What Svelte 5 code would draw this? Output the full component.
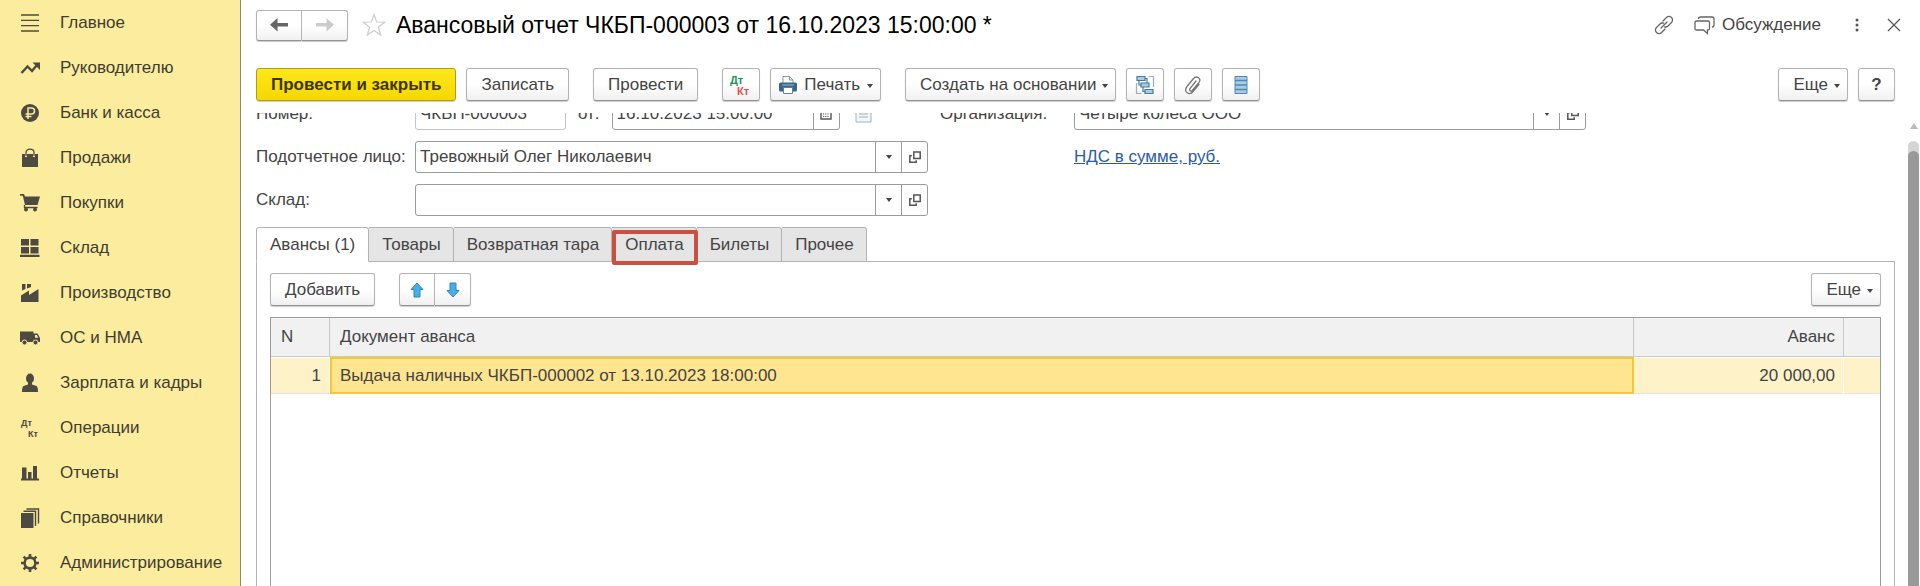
<script lang="ts">
  type Section = { icon: string; label: string }

  const sections: Section[] = [
    { icon: "menu", label: "Главное" },
    { icon: "trend", label: "Руководителю" },
    { icon: "ruble", label: "Банк и касса" },
    { icon: "bag", label: "Продажи" },
    { icon: "cart", label: "Покупки" },
    { icon: "boxes", label: "Склад" },
    { icon: "factory", label: "Производство" },
    { icon: "truck", label: "ОС и НМА" },
    { icon: "person", label: "Зарплата и кадры" },
    { icon: "dtkt", label: "Операции" },
    { icon: "chart", label: "Отчеты" },
    { icon: "books", label: "Справочники" },
    { icon: "gear", label: "Администрирование" },
  ]

  const tabs = ["Авансы (1)", "Товары", "Возвратная тара", "Оплата", "Билеты", "Прочее"]
  const marked = "Оплата"

  const rows = [
    { n: 1, doc: "Выдача наличных ЧКБП-000002 от 13.10.2023 18:00:00", sum: "20 000,00" },
  ]

  let activeTab = $state("Авансы (1)")
  let number = $state("ЧКБП-000003")
  let date = $state("16.10.2023 15:00:00")
  let person = $state("Тревожный Олег Николаевич")
  let warehouse = $state("")
  let company = $state("Четыре колеса ООО")
</script>

{#snippet sectionIcon(name: string)}
  <svg class="section-icon" viewBox="0 0 20 20" width="20" height="20" fill="#4d4a41" aria-hidden="true">
    {#if name === "menu"}
      <path d="M1 2h18M1 7.300h18M1 12.600h18M1 18h18" stroke="#4d4a41" stroke-width="1.300" />
    {:else if name === "trend"}
      <path d="M1.500 15l6-6.500 4.500 4.500 5-6" fill="none" stroke="#4d4a41" stroke-width="2.400" />
      <path d="M12.500 4.500H20V12z" />
    {:else if name === "ruble"}
      <circle cx="10" cy="10" r="9" />
      <path d="M8 16V5h3.500a2.900 2.900 0 0 1 0 6H5.500M5.500 13.500h6" fill="none" stroke="#fbec9e" stroke-width="1.500" />
    {:else if name === "bag"}
      <path d="M2 6h3v3h2V6h6v3h2V6h3v13H2z" />
      <path d="M6 8V4.500C6 0 14 0 14 4.500V8" fill="none" stroke="#4d4a41" stroke-width="1.300" />
    {:else if name === "cart"}
      <path d="M0 1h4l1 2.500h15L17.500 12H5L2.800 2.800H0z" />
      <path d="M4.500 12v2.500h13" fill="none" stroke="#4d4a41" stroke-width="1.300" />
      <circle cx="6" cy="16.500" r="2" /><circle cx="15" cy="16.500" r="2" />
    {:else if name === "boxes"}
      <path d="M1 1h8v6.500H1zM10.500 1h8v6.500h-8zM1 9h8v6.500H1zM10.500 9h8v6.500h-8zM0 16.800h19.500V19H0z" />
    {:else if name === "factory"}
      <path d="M2 1h3.500v5L2 7.500zM7 1h4v3L7 5.500zM1 12.500L9 7.500V12l9.500-6V19H1z" />
    {:else if name === "truck"}
      <path d="M0 3.500h13.500V14H0zM13 5.500h4.500L20 10v4h-7z" />
      <path d="M15 7h1.800l1.600 2.700H15z" fill="#fbec9e" />
      <circle cx="4.500" cy="14.500" r="2.500" stroke="#fbec9e" /><circle cx="15.500" cy="14.500" r="2.500" stroke="#fbec9e" />
    {:else if name === "person"}
      <ellipse cx="10" cy="5.500" rx="4" ry="5" />
      <path d="M8 9h4v2.500l4.500 1.500q1.500 1 1.500 6H2q0-5 1.500-6L8 11.500z" />
    {:else if name === "dtkt"}
      <text class="glyph" x="1" y="8">Дт</text>
      <text class="glyph" x="8" y="19">Кт</text>
    {:else if name === "chart"}
      <path d="M2 4.500h4.500V16H2zM8 9h3.500v7H8zM13 3h4v13h-4zM1 15.500h18V17.500H1z" />
    {:else if name === "books"}
      <path d="M1 5h12.500v15H1z" />
      <path d="M3.500 3.300h12V18M6.500 1h12v14.500" fill="none" stroke="#4d4a41" stroke-width="1.400" />
    {:else}
      <circle cx="10" cy="10" r="5.400" fill="none" stroke="#4d4a41" stroke-width="2.600" />
      <path
        d="M10 1v3M10 16v3M1 10h3M16 10h3M3.600 3.600l2.200 2.200M14.200 14.200l2.200 2.200M3.600 16.400l2.200-2.200M14.200 5.800l2.200-2.200"
        stroke="#4d4a41"
        stroke-width="2.600"
      />
    {/if}
  </svg>
{/snippet}

{#snippet caret()}
  <svg class="caret" viewBox="0 0 6 4" width="6" height="4" aria-hidden="true"><path d="M0 0h6L3 4z" fill="#444" /></svg>
{/snippet}

{#snippet pickers()}
  <button class="pick" aria-label="Выбрать">{@render caret()}</button>
  <button class="pick" aria-label="Открыть">
    <svg viewBox="0 0 12 12" width="12" height="12" fill="none" stroke="#555" stroke-width="1.500" aria-hidden="true">
      <path d="M4.800 1h6.400v6.400H4.800zM2.800 4.800H.8v6.400h6.400V9.200" />
    </svg>
  </button>
{/snippet}

<div class="app">
  <nav class="sections">
    {#each sections as section}
      <a href="#{section.icon}" class="section">
        {@render sectionIcon(section.icon)}
        {section.label}
      </a>
    {/each}
  </nav>

  <main class="document">
    <header class="title-bar">
      <div class="button-pair">
        <button class="btn" aria-label="Назад">
          <svg viewBox="0 0 18 14" width="18" height="14" aria-hidden="true">
            <path d="M7.500 0v5H18v3.500H7.500V13.500L0 6.800z" fill="#666" />
          </svg>
        </button>
        <button class="btn" aria-label="Вперед">
          <svg viewBox="0 0 18 14" width="18" height="14" aria-hidden="true">
            <path d="M10.500 0v5H0v3.500h10.500V13.500L18 6.800z" fill="#ccc" />
          </svg>
        </button>
      </div>
      <button class="plain star" aria-label="В избранное">
        <svg viewBox="0 0 24 24" width="24" height="24" fill="none" stroke="#ccc" stroke-width="1.200" aria-hidden="true">
          <path d="M12 1.500l2.700 7.500 8 .2-6.300 4.900 2.300 7.900-6.700-4.600L5.300 22l2.300-7.900L1.300 9.200l8-.2z" />
        </svg>
      </button>
      <h1>Авансовый отчет ЧКБП-000003 от 16.10.2023 15:00:00 *</h1>
      <div class="title-tools">
        <button class="plain" aria-label="Ссылка">
          <svg viewBox="0 0 20 20" width="20" height="20" fill="none" stroke="#666" stroke-width="1.300" stroke-linecap="round" aria-hidden="true">
            <path d="M9 6l3.500-3.500a3.500 3.500 0 0 1 5 5L14 11a3.500 3.500 0 0 1-3.500.8M11 14l-3.500 3.500a3.500 3.500 0 0 1-5-5L6 9a3.500 3.500 0 0 1 3.500-.8M7 13l6-6" />
          </svg>
        </button>
        <button class="plain discuss">
          <svg viewBox="0 0 21 19" width="21" height="19" fill="none" stroke="#666" stroke-width="1.300" aria-hidden="true">
            <path d="M2.500 5h11.500q1.500 0 1.500 1.500v6q0 1.500-1.500 1.500h-.5v3.500L9.500 14h-7Q1 14 1 12.500v-6Q1 5 2.500 5z" />
            <path d="M4.500 3q0-2 2-2H18q2 0 2 2v6q0 2-2 2" />
          </svg>
          Обсуждение
        </button>
        <button class="plain dots" aria-label="Меню">
          <svg viewBox="0 0 4 14" width="4" height="14" fill="#555" aria-hidden="true">
            <circle cx="2" cy="2" r="1.500" /><circle cx="2" cy="7" r="1.500" /><circle cx="2" cy="12" r="1.500" />
          </svg>
        </button>
        <button class="plain" aria-label="Закрыть">
          <svg viewBox="0 0 14 14" width="14" height="14" stroke="#555" stroke-width="1.200" aria-hidden="true">
            <path d="M1 1l12 12M13 1L1 13" />
          </svg>
        </button>
      </div>
    </header>

    <div class="toolbar">
      <button class="btn primary">Провести и закрыть</button>
      <button class="btn gap-wide">Записать</button>
      <button class="btn gap-wide">Провести</button>
      <button class="btn square" aria-label="Проводки">
        <svg viewBox="0 0 22 22" width="22" height="22" aria-hidden="true">
          <text class="glyph large" x="0" y="10" fill="#1b9550">Дт</text>
          <text class="glyph large" x="7" y="21" fill="#e2504c">Кт</text>
        </svg>
      </button>
      <button class="btn print gap-wide">
        <svg viewBox="0 0 18 20" width="18" height="20" aria-hidden="true">
          <path d="M4 8V1.500h6.500L14 5v3" fill="#fff" stroke="#8095a8" />
          <path d="M10.500 1.500V5H14" fill="none" stroke="#8095a8" />
          <rect x="0" y="7.500" width="18" height="9" rx="1.500" fill="#3d6484" />
          <path d="M3 10h12" stroke="#9ab8d0" />
          <path d="M4.500 12.500h9v6h-9z" fill="#fff" stroke="#5d7f9b" />
        </svg>
        Печать {@render caret()}
      </button>
      <button class="btn">Создать на основании {@render caret()}</button>
      <button class="btn square" aria-label="Структура подчиненности">
        <svg viewBox="0 0 20 20" width="20" height="20" fill="#a9cbe3" stroke="#467ba5" stroke-width="1.200" aria-hidden="true">
          <path d="M2 1.500h8v4H2zM6 8h8v4H6zM10 14.500h8v4h-8z" />
          <path d="M4 5.500V10h2M8 12v4.500h2M10 3.500h2V8" fill="none" />
          <path d="M13.500 1.500h5V12M1.500 8v10.500h5" fill="none" stroke="#8fb3cd" />
        </svg>
      </button>
      <button class="btn square" aria-label="Присоединенные файлы">
        <svg viewBox="0 0 18 20" width="18" height="20" fill="none" stroke="#777" stroke-width="1.300" stroke-linecap="round" aria-hidden="true">
          <path d="M12 6L6 13.500q-1 2 .5 2.500t2-1L15 7.500q2-3-.5-4.800T9.500 3.500L3 11.500q-3 4 .2 6.200T9 16.500l6-7" />
        </svg>
      </button>
      <button class="btn square" aria-label="Список">
        <svg viewBox="0 0 14 20" width="14" height="20" aria-hidden="true">
          <path d="M1 1.500h12v17H1z" fill="#a9cbe3" stroke="#5487ad" />
          <path d="M1 5.500h12M1 10h12M1 14.500h12" stroke="#5487ad" stroke-width="1.400" />
        </svg>
      </button>
      <button class="btn more">Еще {@render caret()}</button>
      <button class="btn help">?</button>
    </div>

    <div class="viewport">
      <div class="scroll-content">
        <form class="fields" onsubmit={(e) => e.preventDefault()}>
          <label for="number">Номер:</label>
          <div class="number-row">
            <div class="field number"><input id="number" bind:value={number} /></div>
            <label for="date">от:</label>
            <div class="field date">
              <input id="date" bind:value={date} />
              <button class="pick" aria-label="Календарь">
                <svg viewBox="0 0 12 12" width="12" height="12" aria-hidden="true">
                  <path d="M1 1h10v10H1z" fill="none" stroke="#555" stroke-width="1.400" />
                  <path d="M1 3h10" stroke="#555" stroke-width="2" />
                  <path d="M3 6h6M3 8.500h6" stroke="#555" stroke-dasharray="1.200 1" />
                </svg>
              </button>
            </div>
            <svg class="note" viewBox="0 0 17 18" width="17" height="18" fill="#f3f7fa" stroke="#a3b1bd" aria-hidden="true">
              <path d="M1 1h15v16H1zM4 5h9M4 9h9M4 12h9" />
            </svg>
          </div>
          <label class="company-label" for="company">Организация:</label>
          <div class="field"><input id="company" bind:value={company} />{@render pickers()}</div>

          <label for="person">Подотчетное лицо:</label>
          <div class="field"><input id="person" bind:value={person} />{@render pickers()}</div>
          <a class="vat" href="#vat">НДС в сумме, руб.</a>

          <label class="first" for="warehouse">Склад:</label>
          <div class="field"><input id="warehouse" bind:value={warehouse} />{@render pickers()}</div>
        </form>

        <div class="tabs" role="tablist">
          {#each tabs as tab}
            <button
              class="tab"
              class:active={tab === activeTab}
              class:marked={tab === marked}
              role="tab"
              aria-selected={tab === activeTab}
              onclick={() => (activeTab = tab)}>{tab}</button
            >
          {/each}
        </div>

        <section class="panel">
          <div class="panel-bar">
            <button class="btn">Добавить</button>
            <div class="button-pair arrows">
              <button class="btn" aria-label="Вверх">
                <svg viewBox="0 0 14 16" width="14" height="16" aria-hidden="true">
                  <path d="M7 1l6 6.500H10V15H4V7.500H1z" fill="#48aee8" stroke="#2f86ba" />
                </svg>
              </button>
              <button class="btn" aria-label="Вниз">
                <svg viewBox="0 0 14 16" width="14" height="16" aria-hidden="true">
                  <path d="M7 15l6-6.500H10V1H4v7.500H1z" fill="#48aee8" stroke="#2f86ba" />
                </svg>
              </button>
            </div>
            <button class="btn more">Еще {@render caret()}</button>
          </div>

          <div class="table-box">
            <table>
              <thead>
                <tr>
                  <th class="col-n">N</th>
                  <th>Документ аванса</th>
                  <th class="col-sum">Аванс</th>
                  <th class="col-end"></th>
                </tr>
              </thead>
              <tbody>
                {#each rows as row}
                  <tr>
                    <td class="right">{row.n}</td>
                    <td class="current">{row.doc}</td>
                    <td class="right">{row.sum}</td>
                    <td></td>
                  </tr>
                {/each}
              </tbody>
            </table>
          </div>
        </section>
      </div>

      <div class="scrollbar" aria-hidden="true">
        <svg viewBox="0 0 8 6" width="8" height="6"><path d="M4 0l4 6H0z" fill="#bbb" /></svg>
        <div class="track"><div class="thumb"></div></div>
      </div>
    </div>
  </main>
</div>

<style>
  :global(body) {
    margin: 0;
    background: #fff;
  }

  .app {
    display: flex;
    height: 100vh;
    overflow: hidden;
    color: #444;
    font-family: "Liberation Sans", Arial, sans-serif;
    font-size: 17px;
    line-height: 20px;
  }

  button,
  input {
    box-sizing: border-box;
    color: inherit;
    font: inherit;
  }

  button {
    cursor: pointer;
  }

  svg {
    flex: none;
  }

  .sections {
    box-sizing: border-box;
    flex: 0 0 241px;
    background: #fbec9e;
    border-right: 1px solid #8f8b74;
  }

  .section {
    display: flex;
    align-items: center;
    gap: 20px;
    height: 45px;
    padding-left: 20px;
    color: #403d30;
    text-decoration: none;
    white-space: nowrap;
  }

  .glyph {
    font-size: 9px;
    font-weight: 700;
  }

  .glyph.large {
    font-size: 11px;
  }

  .document {
    display: flex;
    flex: 1;
    flex-direction: column;
    min-width: 0;
    padding-left: 15px;
  }

  .title-bar {
    display: flex;
    align-items: center;
    height: 50px;
    padding-right: 19px;
  }

  h1 {
    margin: 0 auto 0 10px;
    color: #000;
    font-size: 23px;
    font-weight: 400;
    line-height: 28px;
    white-space: nowrap;
  }

  .plain {
    display: flex;
    align-items: center;
    padding: 0;
    background: none;
    border: 0;
  }

  .star {
    margin-left: 14px;
  }

  .title-tools {
    display: flex;
    align-items: center;
    gap: 20px;
  }

  .discuss {
    gap: 7px;
    margin-right: 6px;
  }

  .dots {
    margin: 0 8px;
  }

  .btn {
    display: flex;
    align-items: center;
    justify-content: center;
    gap: 6px;
    height: 33px;
    padding: 0 14px;
    background: linear-gradient(#fff 50%, #f0f0f0);
    border: 1px solid #b3b3b3;
    border-bottom-color: #929292;
    border-radius: 3px;
    box-shadow: 0 1px 1px #ccc;
    white-space: nowrap;
  }

  .primary {
    background: linear-gradient(#ffe719, #f5d800);
    border-color: #b09c1c;
    color: #3d3500;
    font-weight: 700;
  }

  .button-pair {
    display: flex;
  }

  .button-pair .btn {
    width: 46px;
    height: 31px;
    padding: 0;
  }

  .button-pair .btn:first-child {
    border-radius: 3px 0 0 3px;
  }

  .button-pair .btn:last-child {
    border-left: 0;
    border-radius: 0 3px 3px 0;
  }

  .toolbar {
    display: flex;
    align-items: center;
    gap: 10px;
    padding: 18px 25px 12px 0;
  }

  .gap-wide {
    margin-right: 14px;
  }

  .btn.square {
    width: 38px;
    padding: 0;
  }

  .btn:has(> .caret) {
    padding-right: 7px;
  }

  .btn > .caret {
    margin-top: 3px;
  }

  .btn.print {
    gap: 7px;
    padding-left: 8px;
  }

  .more {
    margin-left: auto;
  }

  .btn.help {
    width: 37px;
    padding: 0;
    font-weight: 700;
  }

  .viewport {
    display: flex;
    flex: 1;
    min-height: 0;
    overflow: hidden;
  }

  /* the form is scrolled down a little, so its first row is cut by the toolbar */
  .scroll-content {
    display: flex;
    flex: 1;
    flex-direction: column;
    min-width: 0;
    margin-top: -15px;
  }

  .fields {
    display: grid;
    grid-template-columns: 159px 513px 146px 512px;
    row-gap: 11px;
    align-items: center;
  }

  .number-row {
    display: flex;
    align-items: center;
    gap: 12px;
  }

  .field {
    display: flex;
    box-sizing: border-box;
    height: 32px;
    background: #fff;
    border: 1px solid #9c9c9c;
    border-radius: 3px;
  }

  .field input {
    flex: 1;
    min-width: 0;
    padding: 0 4px;
    background: none;
    border: 0;
    outline: 0;
  }

  .number {
    width: 151px;
    border-color: #c4c4c4;
  }

  .date {
    width: 228px;
  }

  .pick {
    display: flex;
    align-items: center;
    justify-content: center;
    width: 26px;
    padding: 0;
    background: none;
    border: 0;
    border-left: 1px solid #9c9c9c;
  }

  .note {
    margin-left: 3px;
  }

  .company-label {
    padding-left: 12px;
  }

  .first {
    grid-column: 1;
  }

  .vat {
    grid-column: 4;
    color: #2c5aa8;
  }

  .tabs {
    display: flex;
    margin-top: 11px;
  }

  .tab {
    position: relative;
    height: 35px;
    padding: 0 12px 0 13px;
    background: #e5e5e5;
    border: 1px solid #b3b3b3;
    border-left: 0;
    border-radius: 0 3px 0 0;
    white-space: nowrap;
  }

  .tab.active {
    padding: 0 13px;
    background: #fff;
    border-bottom-color: #fff;
    border-left: 1px solid #b3b3b3;
    border-radius: 3px 3px 0 0;
  }

  .tab.marked::after {
    content: "";
    position: absolute;
    inset: 2px -2px -4px 0;
    z-index: 1;
    border: 4px solid #cb5043;
    border-radius: 2px;
  }

  .panel {
    display: flex;
    flex: 1;
    flex-direction: column;
    margin: -1px 12px 0 0;
    padding: 11px 13px 0;
    border: 1px solid #b3b3b3;
    border-bottom: 0;
  }

  .panel-bar {
    display: flex;
    align-items: center;
    margin-bottom: 11px;
  }

  .arrows {
    margin-left: 24px;
  }

  .button-pair.arrows .btn {
    width: 36px;
    height: 33px;
  }

  .table-box {
    flex: 1;
    border: 1px solid #9c9c9c;
    border-bottom: 0;
  }

  table {
    width: 100%;
    border-collapse: separate;
    border-spacing: 0;
    table-layout: fixed;
  }

  th,
  td {
    box-sizing: border-box;
    padding: 0 8px 0 10px;
    border-right: 1px solid #fff;
    text-align: left;
    white-space: nowrap;
  }

  th {
    height: 39px;
    background: #f1f1f1;
    border-right-color: #c9c9c9;
    border-bottom: 1px solid #c9c9c9;
    font-weight: 400;
  }

  td {
    height: 37px;
    background: #fdf2c8;
    border-top: 1px solid #fff;
    border-bottom: 1px solid #e5e5e5;
  }

  th:last-child,
  td:last-child {
    border-right: 0;
  }

  td.current {
    background: #ffe590;
    border: 2px solid #f0ca30;
    padding: 0 8px;
  }

  .col-n {
    width: 59px;
  }

  .col-sum {
    width: 210px;
  }

  .col-end {
    width: 36px;
  }

  .right,
  .col-sum {
    text-align: right;
  }

  .scrollbar {
    display: flex;
    flex: 0 0 13px;
    flex-direction: column;
    align-items: center;
    gap: 12px;
    padding-top: 10px;
  }

  .track {
    flex: 1;
    width: 11px;
    padding-top: 10px;
    background: #d5d5d5;
    border-radius: 6px 6px 0 0;
  }

  .thumb {
    height: 100%;
    background: #999;
    border-radius: 6px 6px 0 0;
  }
</style>
